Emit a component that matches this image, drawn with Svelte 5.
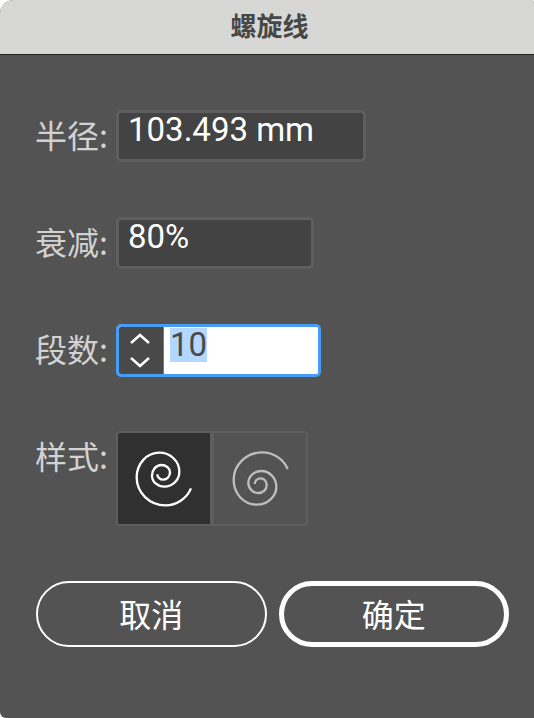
<script>
  import { onMount } from 'svelte';

  let radius = $state('103.493 mm');
  let decay = $state('80%');
  let segments = $state('10');
  let style = $state('ccw');
  let segmentsInput;

  function step(amount) {
    segments = String(Math.max(1, (parseInt(segments, 10) || 0) + amount));
  }

  onMount(() => {
    segmentsInput.focus();
    segmentsInput.select();
  });
</script>

<form class="dialog" onsubmit={(e) => e.preventDefault()}>
  <header><h1>螺旋线</h1></header>

  <div class="body">
    <div class="row">
      <label for="radius">半径:</label>
      <input id="radius" class="field wide" type="text" bind:value={radius} />
    </div>

    <div class="row">
      <label for="decay">衰减:</label>
      <input id="decay" class="field" type="text" bind:value={decay} />
    </div>

    <div class="row">
      <label for="segments">段数:</label>
      <div class="stepper">
        <div class="arrows">
          <button type="button" aria-label="增加" onclick={() => step(1)}>
            <svg viewBox="0 0 20 12"><path d="M1 10 L10 2 L19 10" /></svg>
          </button>
          <button type="button" aria-label="减少" onclick={() => step(-1)}>
            <svg viewBox="0 0 20 12"><path d="M1 2 L10 10 L19 2" /></svg>
          </button>
        </div>
        <input id="segments" type="text" autocomplete="off" bind:value={segments} bind:this={segmentsInput} />
      </div>
    </div>

    <div class="row" role="radiogroup" aria-labelledby="style-label">
      <span class="caption" id="style-label">样式:</span>
      <div class="styles">
        <label class="style">
          <input type="radio" name="style" value="ccw" aria-label="逆时针" bind:group={style} />
          <svg viewBox="18 18 285 285">
            <path d="M142 148A18 16 0 0 0 160 164A20 22 0 0 0 180 142A26 22 0 0 0 154 120A28 32 0 0 0 126 152A37 33 0 0 0 163 185A45 45 0 0 0 208 140A60 57 0 0 0 148 83A68 74 0 0 0 80 157A86 84 0 0 0 166 241A84 84 0 0 0 243 190" />
          </svg>
        </label>
        <label class="style">
          <input type="radio" name="style" value="cw" aria-label="顺时针" bind:group={style} />
          <svg viewBox="306 18 285 285">
            <path d="M434 177A18 17 0 0 1 452 160A18 20 0 0 1 470 180A24 24 0 0 1 446 204A31 30 0 0 1 415 174A39 36 0 0 1 454 138A45 47 0 0 1 499 185A59 54 0 0 1 440 239A69 74 0 0 1 371 165A86 83 0 0 1 457 82A83 83 0 0 1 533 132" />
          </svg>
        </label>
      </div>
    </div>

    <footer>
      <button type="button" class="action">取消</button>
      <button type="submit" class="action primary">确定</button>
    </footer>
  </div>
</form>

<style>
  :global(body) {
    margin: 0;
    background: #fff;
  }

  .dialog {
    display: flex;
    flex-direction: column;
    min-height: 100vh;
    box-sizing: border-box;
    overflow: hidden;
    border-radius: 14px 4px 0 6px;
    background: #535353;
    color: #d2d2d2;
  }

  header {
    display: flex;
    align-items: center;
    justify-content: center;
    height: 54px;
    padding-left: 5px;
    border-bottom: 1px solid #262626;
    background: #d7d7d5;
  }

  h1 {
    margin: 0;
    padding-bottom: 5px;
    color: #474747;
    font: 700 26px/32px "Noto Sans CJK SC", sans-serif;
  }

  .body {
    padding: 55px 25px 40px 35px;
  }

  .row {
    display: flex;
    align-items: flex-start;
    height: 107px;
  }

  .row > label,
  .caption {
    width: 81px;
    font: 400 32px/48px "Noto Sans CJK SC", sans-serif;
  }

  .field,
  .stepper {
    box-sizing: border-box;
    height: 52px;
    border-radius: 5px;
  }

  input[type='text'] {
    min-width: 0;
    margin: 0;
    outline: none;
    font: 400 33px/34px Roboto, sans-serif;
  }

  .field {
    width: 198px;
    padding: 0 9px 14px;
    border: 3px solid #5e5e5e;
    background: #434343;
    color: #fff;
  }

  .wide {
    width: 250px;
  }

  .stepper {
    display: flex;
    width: 205px;
    height: 53px;
    border: 3px solid #479df5;
    overflow: hidden;
    background: #fff;
  }

  .arrows {
    display: flex;
    flex-direction: column;
    box-sizing: border-box;
    width: 45px;
    padding-right: 2px;
    border-right: 1px solid #777;
    background: #494949;
  }

  .arrows button {
    display: flex;
    flex: 1;
    align-items: center;
    justify-content: center;
    padding: 0;
    border: 0;
    background: none;
  }

  .arrows svg {
    width: 20px;
    height: 12px;
    fill: none;
    stroke: #fff;
    stroke-width: 2.5;
  }

  .stepper input {
    flex: 1;
    padding: 0 6px 12px;
    border: 0;
    background: #fff;
    color: #4a4a4a;
  }

  .stepper input::selection {
    background: #b3d7ff;
    color: #4a4a4a;
  }

  .styles {
    display: flex;
  }

  .style {
    display: block;
    position: relative;
    box-sizing: border-box;
    width: 96px;
    height: 95px;
    border: 2px solid #5e5e5e;
    border-radius: 4px 0 0 4px;
  }

  .style + .style {
    border-radius: 0 4px 4px 0;
  }

  .style:has(input:checked) {
    background: #303030;
  }

  .style input {
    position: absolute;
    inset: 0;
    margin: 0;
    opacity: 0;
  }

  .style svg {
    display: block;
    width: 95px;
    height: 95px;
    margin: -2px;
    fill: none;
    stroke: #bebebe;
    stroke-width: 7;
  }

  .style input:checked + svg {
    stroke: #fff;
  }

  footer {
    display: grid;
    grid-template-columns: 1fr 1fr;
    gap: 12px;
    padding: 43px 0 0 1px;
  }

  .action {
    height: 66px;
    padding: 0 0 3px;
    border: 2px solid #fff;
    border-radius: 33px;
    background: none;
    color: #fff;
    font: 400 32px/40px "Noto Sans CJK SC", sans-serif;
  }

  .primary {
    border-width: 5px;
  }
</style>
